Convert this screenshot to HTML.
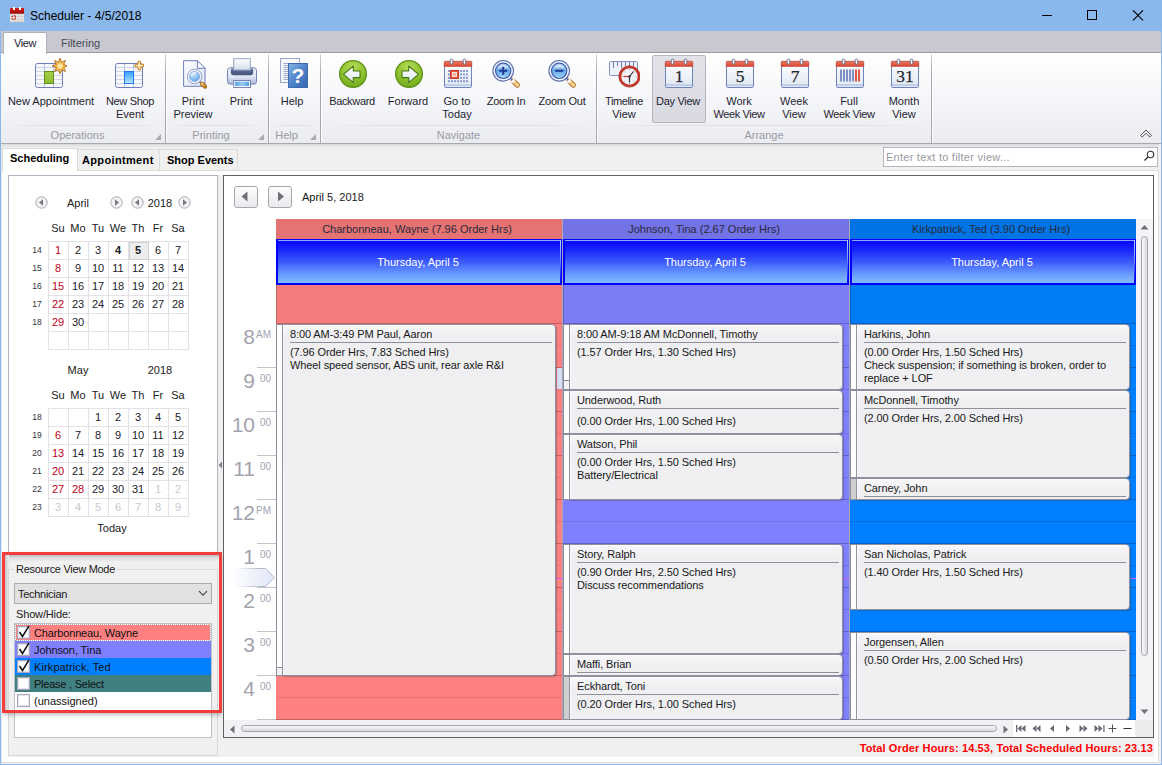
<!DOCTYPE html>
<html>
<head>
<meta charset="utf-8">
<title>Scheduler - 4/5/2018</title>
<style>
html,body{margin:0;padding:0;}
body{width:1162px;height:765px;overflow:hidden;position:relative;background:#f0f0f0;font-family:"Liberation Sans",sans-serif;font-size:11px;color:#202020;}
.abs,#win *{position:absolute;box-sizing:border-box;}
#win{position:absolute;left:0;top:0;width:1162px;height:765px;overflow:hidden;}
#win span.t{white-space:pre;line-height:13px;}
/* title */
#title{left:0;top:0;width:1162px;height:31px;background:#8bb8ec;}
#title .cap{left:30px;top:9px;font-size:12px;line-height:15px;color:#000;white-space:pre;}
/* ribbon */
#tabrow{left:1px;top:31px;width:1160px;height:22px;background:#c8c8d0;border-bottom:1px solid #9a9aa2;}
#tabview{left:3px;top:32px;width:44px;height:22px;background:#fdfdfe;border:1px solid #b0b0bc;border-bottom:none;border-radius:2px 2px 0 0;}
#ribbon{left:1px;top:53px;width:1160px;height:91px;background:linear-gradient(#ffffff,#f4f5f8 55%,#ebecf0);border-bottom:1px solid #a8a8b0;}
.gsep{top:54px;width:2px;height:89px;background:linear-gradient(90deg,#a6a7b2 50%,rgba(255,255,255,0.8) 50%);-webkit-mask-image:linear-gradient(rgba(0,0,0,0.5),#000 22%);mask-image:linear-gradient(rgba(0,0,0,0.5),#000 22%);}
.glab{top:129px;height:13px;line-height:13px;color:#9a9aa4;text-align:center;white-space:pre;}
.gline{top:125px;height:1px;background:linear-gradient(90deg,rgba(225,226,232,0),#dfe0e6 20%,#dfe0e6 80%,rgba(225,226,232,0));}
.rb{top:95px;width:120px;margin-left:-60px;text-align:center;line-height:13px;color:#1e1e32;white-space:pre;}
.ic{top:58px;width:32px;height:32px;margin-left:-16px;}
/* lower */
.ptab{top:148px;height:22px;font-weight:bold;font-size:11px;line-height:13px;color:#000;white-space:pre;}
</style>
</head>
<body>
<div id="win">
<!-- TITLE -->
<div id="title">
 <svg style="left:9px;top:6px;width:16px;height:17px" viewBox="0 0 16 17">
  <defs><linearGradient id="ti" x1="0" y1="0" x2="0" y2="1"><stop offset="0" stop-color="#d41c14"/><stop offset="1" stop-color="#a00c08"/></linearGradient></defs>
  <rect x="1" y="7.500" width="14" height="8.500" fill="#e9e7e4"/>
  <path d="M1 10.500h14M1 13.500h14M6.500 7.500v8.500M9.500 7.500v8.500M12.500 7.500v8.500" stroke="#d2d0cc" stroke-width="0.800"/>
  <rect x="1" y="15.500" width="14" height="0.800" fill="#c4c2be"/>
  <path d="M2 2h12a1 1 0 0 1 1 1v4.700h-14v-4.700a1 1 0 0 1 1-1z" fill="url(#ti)"/>
  <rect x="4" y="1" width="2" height="3" fill="#ffffff"/><rect x="10" y="1" width="2" height="3" fill="#ffffff"/>
  <circle cx="4.700" cy="11.600" r="2" fill="none" stroke="#cc2a24" stroke-width="1.100" stroke-dasharray="2.200 0.700"/>
 </svg>
 <span class="cap">Scheduler - 4/5/2018</span>
 <svg style="left:1042px;top:10px;width:102px;height:11px" viewBox="0 0 102 11"><path d="M0 5.500h10" stroke="#000" stroke-width="1"/><rect x="45.500" y="0.500" width="9" height="9" fill="none" stroke="#000" stroke-width="1"/><path d="M91 0.300L101 10.300M101 0.300L91 10.300" stroke="#000" stroke-width="1.100"/></svg>
</div>
<!-- RIBBON -->
<div id="tabrow"></div>
<div id="ribbon"></div>
<div id="tabview"></div>
<span class="t" style="left:14px;top:37px;color:#1e1e32;letter-spacing:-0.400px">View</span>
<span class="t" style="left:61px;top:37px;color:#4a4a55;">Filtering</span>
<div style="left:652px;top:55px;width:54px;height:68px;border:1px solid #b4b5be;border-radius:2px;background:linear-gradient(#e2e3e9,#d9dae1);"></div>
<svg class="ic" style="left:51px" viewBox="0 0 32 32"><defs><linearGradient id="g1" x1="0" y1="0" x2="0" y2="1"><stop offset="0" stop-color="#a4cf4a"/><stop offset="1" stop-color="#8dbb2e"/></linearGradient></defs><g transform="translate(-3,0)"><rect x="3.5" y="5.5" width="27" height="24" rx="2" fill="#f6f8fc" stroke="#6f7fb6"/><path d="M4 9.5H30" stroke="#cfd6ea" stroke-width="1"/><path d="M4 13.5H30" stroke="#cfd6ea" stroke-width="1"/><path d="M4 17.5H30" stroke="#cfd6ea" stroke-width="1"/><path d="M4 21.5H30" stroke="#cfd6ea" stroke-width="1"/><path d="M4 25.5H30" stroke="#cfd6ea" stroke-width="1"/><path d="M12.5 6V29" stroke="#b9c3e0" stroke-width="1"/><path d="M21.5 6V29" stroke="#b9c3e0" stroke-width="1"/><rect x="12.5" y="13.5" width="9" height="12" fill="url(#g1)" stroke="#5f8f1e"/><polygon points="28.0,0.2 29.5,4.4 33.5,2.5 31.6,6.5 35.8,8.0 31.6,9.5 33.5,13.5 29.5,11.6 28.0,15.8 26.5,11.6 22.5,13.5 24.4,9.5 20.2,8.0 24.4,6.5 22.5,2.5 26.5,4.4" fill="#f6c052" stroke="#bd761c" stroke-width="1"/><circle cx="28" cy="8" r="2.6" fill="#fbe3a0"/></g></svg>
<div class="rb" style="left:51px">New Appointment</div>
<svg class="ic" style="left:131px" viewBox="0 0 32 32"><defs><linearGradient id="g2" x1="0" y1="0" x2="0" y2="1"><stop offset="0" stop-color="#2fa0ff"/><stop offset="1" stop-color="#bfe4ff"/></linearGradient></defs><g transform="translate(-3,0)"><rect x="3.5" y="5.5" width="27" height="24" rx="2" fill="#f6f8fc" stroke="#6f7fb6"/><path d="M4 9.5H30" stroke="#cfd6ea" stroke-width="1"/><path d="M4 13.5H30" stroke="#cfd6ea" stroke-width="1"/><path d="M4 17.5H30" stroke="#cfd6ea" stroke-width="1"/><path d="M4 21.5H30" stroke="#cfd6ea" stroke-width="1"/><path d="M4 25.5H30" stroke="#cfd6ea" stroke-width="1"/><path d="M12.5 6V29" stroke="#b9c3e0" stroke-width="1"/><path d="M21.5 6V29" stroke="#b9c3e0" stroke-width="1"/><rect x="12.5" y="13.5" width="9" height="12" fill="url(#g2)" stroke="#1e78f0"/><path d="M26 3.300h2.600v3h3v2.600h-3v3h-2.600v-3h-3v-2.600h3z" fill="#fdebbd" stroke="#c4811f" stroke-width="1"/></g></svg>
<div class="rb" style="left:130px"><span style="position:static;letter-spacing:-0.33px">New Shop</span><br>Event</div>
<svg class="ic" style="left:194px" viewBox="0 0 32 32"><defs><radialGradient id="m3" cx="0.400" cy="0.300" r="0.800"><stop offset="0" stop-color="#cfe8fb"/><stop offset="0.600" stop-color="#7db8ec"/><stop offset="1" stop-color="#4a8cd8"/></radialGradient></defs><defs><linearGradient id="pg3" x1="0" y1="0" x2="1" y2="1"><stop offset="0" stop-color="#ffffff"/><stop offset="1" stop-color="#dde4f3"/></linearGradient><linearGradient id="ph3" x1="0" y1="0" x2="1" y2="1"><stop offset="0" stop-color="#f3c26a"/><stop offset="1" stop-color="#c07818"/></linearGradient></defs><path d="M5.600 2.700h13.800l7.600 7.600v18h-21.400z" fill="url(#pg3)" stroke="#6f7fb8"/><path d="M19.400 2.700v7.600h7.600z" fill="#fbfcff" stroke="#6f7fb8" stroke-linejoin="round"/><path d="M21 23L24 26" stroke="#8e9abc" stroke-width="2.400" stroke-linecap="round"/><path d="M24 25.900L27 28.500" stroke="#9a5c12" stroke-width="4.200" stroke-linecap="round"/><path d="M24 25.900L27 28.500" stroke="url(#ph3)" stroke-width="2.800" stroke-linecap="round"/><circle cx="16.6" cy="18.5" r="6" fill="url(#m3)" stroke="#eef2fa" stroke-width="2"/><circle cx="16.6" cy="18.5" r="7.3" fill="none" stroke="#7d8cbc" stroke-width="0.800"/><circle cx="16.6" cy="18.5" r="5" fill="none" stroke="#7f9fd0" stroke-width="0.700"/><path d="M13.300 17.500a3.800 3.800 0 0 1 4.500 -2.600" fill="none" stroke="#ffffff" stroke-width="1.200" stroke-linecap="round" opacity="0.850"/></svg>
<div class="rb" style="left:193px">Print<br>Preview</div>
<svg class="ic" style="left:242px" viewBox="0 0 32 32"><defs><linearGradient id="pb" x1="0" y1="0" x2="0" y2="1"><stop offset="0" stop-color="#f2f5fb"/><stop offset="0.550" stop-color="#dfe5f2"/><stop offset="1" stop-color="#a9b6d6"/></linearGradient><linearGradient id="pp" x1="0" y1="0" x2="0" y2="1"><stop offset="0" stop-color="#ffffff"/><stop offset="1" stop-color="#d6dcec"/></linearGradient><linearGradient id="ps" x1="0" y1="0" x2="0" y2="1"><stop offset="0" stop-color="#7f8db4"/><stop offset="0.350" stop-color="#566690"/><stop offset="1" stop-color="#44537c"/></linearGradient><linearGradient id="pt" x1="0" y1="0" x2="1" y2="0"><stop offset="0" stop-color="#4d9fe4"/><stop offset="0.500" stop-color="#9accf2"/><stop offset="1" stop-color="#4d9fe4"/></linearGradient></defs><path d="M4.500 9.700h23a3 3 0 0 1 3 3v11a2.400 2.400 0 0 1 -2.400 2.400h-24.200a2.400 2.400 0 0 1 -2.400-2.400v-11a3 3 0 0 1 3-3z" fill="url(#pb)" stroke="#7585b6"/><path d="M6.200 10.200h19.600a1.400 1.400 0 0 1 1.400 1.400v2.600a3 3 0 0 1 -3 3h-16.400a3 3 0 0 1 -3-3v-2.600a1.400 1.400 0 0 1 1.400-1.400z" fill="url(#ps)"/><rect x="7.700" y="0.700" width="16.600" height="11.300" fill="url(#pp)" stroke="#98a4c8"/><rect x="7.700" y="22.500" width="16.800" height="7" fill="#f6f8fc" stroke="#7585b6"/><rect x="9.200" y="23.700" width="13.800" height="4.300" fill="url(#pt)"/></svg>
<div class="rb" style="left:241px">Print</div>
<svg class="ic" style="left:292px" viewBox="0 0 32 32"><defs><linearGradient id="hb" x1="0" y1="0" x2="1" y2="1"><stop offset="0" stop-color="#86b4e6"/><stop offset="0.500" stop-color="#4f84c8"/><stop offset="1" stop-color="#3466ae"/></linearGradient></defs><rect x="4.500" y="0.500" width="19" height="24" fill="#f6f8fc" stroke="#9aa6c8"/><path d="M7.500 5.5h5" stroke="#9ca8c6" stroke-width="1"/><path d="M7.500 7.5h5" stroke="#9ca8c6" stroke-width="1"/><path d="M7.500 9.5h5" stroke="#9ca8c6" stroke-width="1"/><path d="M7.500 11.5h5" stroke="#9ca8c6" stroke-width="1"/><path d="M7.500 13.5h5" stroke="#9ca8c6" stroke-width="1"/><path d="M7.500 15.5h5" stroke="#9ca8c6" stroke-width="1"/><path d="M7.500 17.5h5" stroke="#9ca8c6" stroke-width="1"/><path d="M7.500 19.5h5" stroke="#9ca8c6" stroke-width="1"/><path d="M7.500 21.5h5" stroke="#9ca8c6" stroke-width="1"/><rect x="12.500" y="5.500" width="19" height="24" fill="url(#hb)" stroke="#3f6cb0"/><text x="21.800" y="25.300" text-anchor="middle" font-family="Liberation Sans,sans-serif" font-weight="bold" font-size="21" fill="#ffffff">?</text></svg>
<div class="rb" style="left:292px">Help</div>
<svg class="ic" style="left:353px" viewBox="0 0 32 32"><defs><radialGradient id="a4" cx="0.5" cy="0.25" r="0.8"><stop offset="0" stop-color="#b5dc58"/><stop offset="0.6" stop-color="#8cbf2c"/><stop offset="1" stop-color="#6ea21c"/></radialGradient><linearGradient id="aw4" x1="0" y1="0" x2="0" y2="1"><stop offset="0" stop-color="#ffffff"/><stop offset="1" stop-color="#dbe6f2"/></linearGradient></defs><circle cx="16" cy="16" r="13.4" fill="url(#a4)" stroke="#5c9016" stroke-width="1.2"/><path d="M6.500 16.300L16.300 8v5h6.700v6.600h-6.700v5z" fill="url(#aw4)" stroke="#43780f" stroke-width="1.100" stroke-linejoin="round"/></svg>
<div class="rb" style="left:352px"><span style="position:static;letter-spacing:-0.33px">Backward</span></div>
<svg class="ic" style="left:409px" viewBox="0 0 32 32"><defs><radialGradient id="a5" cx="0.5" cy="0.25" r="0.8"><stop offset="0" stop-color="#b5dc58"/><stop offset="0.6" stop-color="#8cbf2c"/><stop offset="1" stop-color="#6ea21c"/></radialGradient><linearGradient id="aw5" x1="0" y1="0" x2="0" y2="1"><stop offset="0" stop-color="#ffffff"/><stop offset="1" stop-color="#dbe6f2"/></linearGradient></defs><circle cx="16" cy="16" r="13.4" fill="url(#a5)" stroke="#5c9016" stroke-width="1.2"/><g transform="translate(32,0) scale(-1,1)"><path d="M6.500 16.300L16.300 8v5h6.700v6.600h-6.700v5z" fill="url(#aw5)" stroke="#43780f" stroke-width="1.100" stroke-linejoin="round"/></g></svg>
<div class="rb" style="left:408px">Forward</div>
<svg class="ic" style="left:458px" viewBox="0 0 32 32"><defs><linearGradient id="cb12" x1="0" y1="0" x2="0" y2="1"><stop offset="0" stop-color="#ffffff"/><stop offset="1" stop-color="#dfe7f3"/></linearGradient><linearGradient id="cr12" x1="0" y1="0" x2="0" y2="1"><stop offset="0" stop-color="#ee7b66"/><stop offset="1" stop-color="#d9432f"/></linearGradient></defs><rect x="2.5" y="3.5" width="27" height="26" rx="1.2" fill="url(#cb12)" stroke="#6f84bd"/><rect x="3" y="26.5" width="26" height="1" fill="#9fb3dc"/><path d="M3.2 3.2h25.6a1 1 0 0 1 1 1v4.3h-27.6v-4.3a1 1 0 0 1 1-1z" fill="url(#cr12)" stroke="#c24a3a" stroke-width="0.6"/><rect x="8.200" y="1" width="2.600" height="5.400" rx="1.300" fill="#f4f4f8" stroke="#666b86" stroke-width="0.900"/><rect x="21.200" y="1" width="2.600" height="5.400" rx="1.300" fill="#f4f4f8" stroke="#666b86" stroke-width="0.900"/><rect x="6" y="12.0" width="2" height="2" fill="#8e9bd0"/><rect x="9" y="12.0" width="2" height="2" fill="#8e9bd0"/><rect x="12" y="12.0" width="2" height="2" fill="#8e9bd0"/><rect x="15" y="12.0" width="2" height="2" fill="#8e9bd0"/><rect x="18" y="12.0" width="2" height="2" fill="#8e9bd0"/><rect x="21" y="12.0" width="2" height="2" fill="#8e9bd0"/><rect x="24" y="12.0" width="2" height="2" fill="#8e9bd0"/><rect x="6" y="15.4" width="2" height="2" fill="#8e9bd0"/><rect x="9" y="15.4" width="2" height="2" fill="#8e9bd0"/><rect x="12" y="15.4" width="2" height="2" fill="#8e9bd0"/><rect x="15" y="15.4" width="2" height="2" fill="#8e9bd0"/><rect x="18" y="15.4" width="2" height="2" fill="#8e9bd0"/><rect x="21" y="15.4" width="2" height="2" fill="#8e9bd0"/><rect x="24" y="15.4" width="2" height="2" fill="#8e9bd0"/><rect x="6" y="18.8" width="2" height="2" fill="#8e9bd0"/><rect x="9" y="18.8" width="2" height="2" fill="#8e9bd0"/><rect x="12" y="18.8" width="2" height="2" fill="#8e9bd0"/><rect x="15" y="18.8" width="2" height="2" fill="#8e9bd0"/><rect x="18" y="18.8" width="2" height="2" fill="#8e9bd0"/><rect x="21" y="18.8" width="2" height="2" fill="#8e9bd0"/><rect x="24" y="18.8" width="2" height="2" fill="#8e9bd0"/><rect x="6" y="22.2" width="2" height="2" fill="#8e9bd0"/><rect x="9" y="22.2" width="2" height="2" fill="#8e9bd0"/><rect x="12" y="22.2" width="2" height="2" fill="#8e9bd0"/><rect x="15" y="22.2" width="2" height="2" fill="#8e9bd0"/><rect x="18" y="22.2" width="2" height="2" fill="#8e9bd0"/><rect x="21" y="22.2" width="2" height="2" fill="#8e9bd0"/><rect x="24" y="22.2" width="2" height="2" fill="#8e9bd0"/><rect x="8.500" y="12.500" width="8" height="8" fill="#e8543e" stroke="#c23a28"/><rect x="10.500" y="14.500" width="4" height="4" fill="#f7b0a0" stroke="#fbe0d8" stroke-width="1"/></svg>
<div class="rb" style="left:457px">Go to<br>Today</div>
<svg class="ic" style="left:506px" viewBox="0 0 32 32"><defs><radialGradient id="m6" cx="0.400" cy="0.300" r="0.800"><stop offset="0" stop-color="#cfe8fb"/><stop offset="0.600" stop-color="#7db8ec"/><stop offset="1" stop-color="#4a8cd8"/></radialGradient></defs><defs><linearGradient id="zg6" x1="0" y1="0" x2="0" y2="1"><stop offset="0" stop-color="#c2daf6"/><stop offset="0.500" stop-color="#68a6e6"/><stop offset="1" stop-color="#a8daf8"/></linearGradient><linearGradient id="zh6" x1="0" y1="1" x2="1" y2="0"><stop offset="0" stop-color="#d88a20"/><stop offset="0.500" stop-color="#fbe2b0"/><stop offset="1" stop-color="#e09a30"/></linearGradient></defs><path d="M19.500 19.500L23.500 23.500" stroke="#5f6c98" stroke-width="3" stroke-linecap="butt"/><path d="M19.800 20.600L22.600 23.400" stroke="#c8d0e6" stroke-width="1" /><path d="M23.600 23.400L27.500 27.100" stroke="#a8661a" stroke-width="5" stroke-linecap="round"/><path d="M23.400 23.200L27.500 27.100" stroke="url(#zh6)" stroke-width="3.600" stroke-linecap="round"/><path d="M22.300 22.100L24 23.800" stroke="#f4f6fa" stroke-width="4.400"/><circle cx="13.2" cy="12.8" r="10.300" fill="#f4f7fc" stroke="#5f6fae" stroke-width="1.100"/><circle cx="13.2" cy="12.8" r="7.700" fill="url(#zg6)" stroke="#3f5cae" stroke-width="1.100"/><path d="M8 10.500a5.600 5.600 0 0 1 10.400 0a9 5 0 0 0 -10.400 0z" fill="#ffffff" opacity="0.550"/><path d="M9.200 12.800h8" stroke="#1d3a98" stroke-width="2"/><path d="M13.200 8.800v8" stroke="#1d3a98" stroke-width="2"/></svg>
<div class="rb" style="left:506px"><span style="position:static;letter-spacing:-0.25px">Zoom In</span></div>
<svg class="ic" style="left:562px" viewBox="0 0 32 32"><defs><radialGradient id="m7" cx="0.400" cy="0.300" r="0.800"><stop offset="0" stop-color="#cfe8fb"/><stop offset="0.600" stop-color="#7db8ec"/><stop offset="1" stop-color="#4a8cd8"/></radialGradient></defs><defs><linearGradient id="zg7" x1="0" y1="0" x2="0" y2="1"><stop offset="0" stop-color="#c2daf6"/><stop offset="0.500" stop-color="#68a6e6"/><stop offset="1" stop-color="#a8daf8"/></linearGradient><linearGradient id="zh7" x1="0" y1="1" x2="1" y2="0"><stop offset="0" stop-color="#d88a20"/><stop offset="0.500" stop-color="#fbe2b0"/><stop offset="1" stop-color="#e09a30"/></linearGradient></defs><path d="M19.500 19.500L23.500 23.500" stroke="#5f6c98" stroke-width="3" stroke-linecap="butt"/><path d="M19.800 20.600L22.600 23.400" stroke="#c8d0e6" stroke-width="1" /><path d="M23.600 23.400L27.500 27.100" stroke="#a8661a" stroke-width="5" stroke-linecap="round"/><path d="M23.400 23.200L27.500 27.100" stroke="url(#zh7)" stroke-width="3.600" stroke-linecap="round"/><path d="M22.300 22.100L24 23.800" stroke="#f4f6fa" stroke-width="4.400"/><circle cx="13.2" cy="12.8" r="10.300" fill="#f4f7fc" stroke="#5f6fae" stroke-width="1.100"/><circle cx="13.2" cy="12.8" r="7.700" fill="url(#zg7)" stroke="#3f5cae" stroke-width="1.100"/><path d="M8 10.500a5.600 5.600 0 0 1 10.400 0a9 5 0 0 0 -10.400 0z" fill="#ffffff" opacity="0.550"/><path d="M9.200 12.800h8" stroke="#1d3a98" stroke-width="2"/></svg>
<div class="rb" style="left:562px"><span style="position:static;letter-spacing:-0.25px">Zoom Out</span></div>
<svg class="ic" style="left:624px" viewBox="0 0 32 32"><rect x="1.500" y="3.500" width="28" height="14" rx="1" fill="#eef1fa" stroke="#8593c4"/><path d="M5.5 4v6" stroke="#6f7fb6" stroke-width="1"/><path d="M9.5 4v4" stroke="#6f7fb6" stroke-width="1"/><path d="M13.5 4v6" stroke="#6f7fb6" stroke-width="1"/><path d="M17.5 4v4" stroke="#6f7fb6" stroke-width="1"/><path d="M21.5 4v6" stroke="#6f7fb6" stroke-width="1"/><path d="M25.5 4v4" stroke="#6f7fb6" stroke-width="1"/><circle cx="21.500" cy="18.500" r="9.400" fill="#f1f3f8" stroke="#c53628" stroke-width="2.400"/><circle cx="21.500" cy="18.500" r="10.700" fill="none" stroke="#9e2a20" stroke-width="0.7"/><path d="M21.500 18.500L25.500 13.500" stroke="#333" stroke-width="1.200"/><path d="M21.500 18.500V24.500" stroke="#333" stroke-width="1.200"/><path d="M21.500 18.500H15.500" stroke="#d03a2c" stroke-width="1.200"/><circle cx="21.500" cy="18.500" r="1.200" fill="#333"/><g fill="#8a8fa0"><circle cx="21.500" cy="11.800" r="0.600"/><circle cx="28.200" cy="18.500" r="0.600"/><circle cx="21.500" cy="25.200" r="0.600"/><circle cx="14.800" cy="18.500" r="0.600"/><circle cx="26.200" cy="13.800" r="0.500"/><circle cx="26.200" cy="23.200" r="0.500"/><circle cx="16.800" cy="13.800" r="0.500"/><circle cx="16.800" cy="23.200" r="0.500"/></g></svg>
<div class="rb" style="left:624px"><span style="position:static;letter-spacing:-0.40px">Timeline</span><br>View</div>
<svg class="ic" style="left:679px" viewBox="0 0 32 32"><defs><linearGradient id="cb8" x1="0" y1="0" x2="0" y2="1"><stop offset="0" stop-color="#ffffff"/><stop offset="1" stop-color="#dfe7f3"/></linearGradient><linearGradient id="cr8" x1="0" y1="0" x2="0" y2="1"><stop offset="0" stop-color="#ee7b66"/><stop offset="1" stop-color="#d9432f"/></linearGradient></defs><rect x="2.5" y="3.5" width="27" height="26" rx="1.2" fill="url(#cb8)" stroke="#6f84bd"/><rect x="3" y="26.5" width="26" height="1" fill="#9fb3dc"/><path d="M3.2 3.2h25.6a1 1 0 0 1 1 1v4.3h-27.6v-4.3a1 1 0 0 1 1-1z" fill="url(#cr8)" stroke="#c24a3a" stroke-width="0.6"/><rect x="8.200" y="1" width="2.600" height="5.400" rx="1.300" fill="#f4f4f8" stroke="#666b86" stroke-width="0.900"/><rect x="21.200" y="1" width="2.600" height="5.400" rx="1.300" fill="#f4f4f8" stroke="#666b86" stroke-width="0.900"/><text x="16" y="24.2" text-anchor="middle" font-family="Liberation Serif,serif" font-size="17.500" fill="#26282f" stroke="#26282f" stroke-width="0.250">1</text></svg>
<div class="rb" style="left:678px"><span style="position:static;letter-spacing:-0.30px">Day View</span></div>
<svg class="ic" style="left:740px" viewBox="0 0 32 32"><defs><linearGradient id="cb9" x1="0" y1="0" x2="0" y2="1"><stop offset="0" stop-color="#ffffff"/><stop offset="1" stop-color="#dfe7f3"/></linearGradient><linearGradient id="cr9" x1="0" y1="0" x2="0" y2="1"><stop offset="0" stop-color="#ee7b66"/><stop offset="1" stop-color="#d9432f"/></linearGradient></defs><rect x="2.5" y="3.5" width="27" height="26" rx="1.2" fill="url(#cb9)" stroke="#6f84bd"/><rect x="3" y="26.5" width="26" height="1" fill="#9fb3dc"/><path d="M3.2 3.2h25.6a1 1 0 0 1 1 1v4.3h-27.6v-4.3a1 1 0 0 1 1-1z" fill="url(#cr9)" stroke="#c24a3a" stroke-width="0.6"/><rect x="8.200" y="1" width="2.600" height="5.400" rx="1.300" fill="#f4f4f8" stroke="#666b86" stroke-width="0.900"/><rect x="21.200" y="1" width="2.600" height="5.400" rx="1.300" fill="#f4f4f8" stroke="#666b86" stroke-width="0.900"/><text x="16" y="24.2" text-anchor="middle" font-family="Liberation Serif,serif" font-size="17.500" fill="#26282f" stroke="#26282f" stroke-width="0.250">5</text></svg>
<div class="rb" style="left:739px">Work<br><span style="position:static;letter-spacing:-0.40px">Week View</span></div>
<svg class="ic" style="left:795px" viewBox="0 0 32 32"><defs><linearGradient id="cb10" x1="0" y1="0" x2="0" y2="1"><stop offset="0" stop-color="#ffffff"/><stop offset="1" stop-color="#dfe7f3"/></linearGradient><linearGradient id="cr10" x1="0" y1="0" x2="0" y2="1"><stop offset="0" stop-color="#ee7b66"/><stop offset="1" stop-color="#d9432f"/></linearGradient></defs><rect x="2.5" y="3.5" width="27" height="26" rx="1.2" fill="url(#cb10)" stroke="#6f84bd"/><rect x="3" y="26.5" width="26" height="1" fill="#9fb3dc"/><path d="M3.2 3.2h25.6a1 1 0 0 1 1 1v4.3h-27.6v-4.3a1 1 0 0 1 1-1z" fill="url(#cr10)" stroke="#c24a3a" stroke-width="0.6"/><rect x="8.200" y="1" width="2.600" height="5.400" rx="1.300" fill="#f4f4f8" stroke="#666b86" stroke-width="0.900"/><rect x="21.200" y="1" width="2.600" height="5.400" rx="1.300" fill="#f4f4f8" stroke="#666b86" stroke-width="0.900"/><text x="16" y="24.2" text-anchor="middle" font-family="Liberation Serif,serif" font-size="17.500" fill="#26282f" stroke="#26282f" stroke-width="0.250">7</text></svg>
<div class="rb" style="left:794px">Week<br>View</div>
<svg class="ic" style="left:850px" viewBox="0 0 32 32"><defs><linearGradient id="cb13" x1="0" y1="0" x2="0" y2="1"><stop offset="0" stop-color="#ffffff"/><stop offset="1" stop-color="#dfe7f3"/></linearGradient><linearGradient id="cr13" x1="0" y1="0" x2="0" y2="1"><stop offset="0" stop-color="#ee7b66"/><stop offset="1" stop-color="#d9432f"/></linearGradient></defs><rect x="2.5" y="3.5" width="27" height="26" rx="1.2" fill="url(#cb13)" stroke="#6f84bd"/><rect x="3" y="26.5" width="26" height="1" fill="#9fb3dc"/><path d="M3.2 3.2h25.6a1 1 0 0 1 1 1v4.3h-27.6v-4.3a1 1 0 0 1 1-1z" fill="url(#cr13)" stroke="#c24a3a" stroke-width="0.6"/><rect x="8.200" y="1" width="2.600" height="5.400" rx="1.300" fill="#f4f4f8" stroke="#666b86" stroke-width="0.900"/><rect x="21.200" y="1" width="2.600" height="5.400" rx="1.300" fill="#f4f4f8" stroke="#666b86" stroke-width="0.900"/><rect x="6" y="11.500" width="2" height="12" fill="#7f8fc8"/><rect x="9" y="11.500" width="2" height="12" fill="#7f8fc8"/><rect x="12" y="11.500" width="2" height="12" fill="#7f8fc8"/><rect x="15" y="11.500" width="2" height="12" fill="#7f8fc8"/><rect x="18" y="11.500" width="2" height="12" fill="#7f8fc8"/><rect x="21" y="11.500" width="2" height="12" fill="#e4573f"/><rect x="24" y="11.500" width="2" height="12" fill="#e4573f"/></svg>
<div class="rb" style="left:849px">Full<br><span style="position:static;letter-spacing:-0.40px">Week View</span></div>
<svg class="ic" style="left:905px" viewBox="0 0 32 32"><defs><linearGradient id="cb11" x1="0" y1="0" x2="0" y2="1"><stop offset="0" stop-color="#ffffff"/><stop offset="1" stop-color="#dfe7f3"/></linearGradient><linearGradient id="cr11" x1="0" y1="0" x2="0" y2="1"><stop offset="0" stop-color="#ee7b66"/><stop offset="1" stop-color="#d9432f"/></linearGradient></defs><rect x="2.5" y="3.5" width="27" height="26" rx="1.2" fill="url(#cb11)" stroke="#6f84bd"/><rect x="3" y="26.5" width="26" height="1" fill="#9fb3dc"/><path d="M3.2 3.2h25.6a1 1 0 0 1 1 1v4.3h-27.6v-4.3a1 1 0 0 1 1-1z" fill="url(#cr11)" stroke="#c24a3a" stroke-width="0.6"/><rect x="8.200" y="1" width="2.600" height="5.400" rx="1.300" fill="#f4f4f8" stroke="#666b86" stroke-width="0.900"/><rect x="21.200" y="1" width="2.600" height="5.400" rx="1.300" fill="#f4f4f8" stroke="#666b86" stroke-width="0.900"/><text x="16" y="24.2" text-anchor="middle" font-family="Liberation Serif,serif" font-size="17.500" fill="#26282f" stroke="#26282f" stroke-width="0.250">31</text></svg>
<div class="rb" style="left:904px">Month<br>View</div>
<div class="gsep" style="left:165px"></div>
<div class="gsep" style="left:268px"></div>
<div class="gsep" style="left:320px"></div>
<div class="gsep" style="left:596px"></div>
<div class="gsep" style="left:931px"></div>
<div class="gline" style="left:8px;width:151px"></div>
<div class="glab" style="left:1px;width:153px">Operations</div>
<svg style="left:155px;top:134px;width:6px;height:6px" viewBox="0 0 6 6"><path d="M6 0V6H0z" fill="#a9aab4"/></svg>
<div class="gline" style="left:172px;width:90px"></div>
<div class="glab" style="left:165px;width:92px">Printing</div>
<svg style="left:258px;top:134px;width:6px;height:6px" viewBox="0 0 6 6"><path d="M6 0V6H0z" fill="#a9aab4"/></svg>
<div class="gline" style="left:275px;width:39px"></div>
<div class="glab" style="left:267px;width:39px">Help</div>
<svg style="left:310px;top:134px;width:6px;height:6px" viewBox="0 0 6 6"><path d="M6 0V6H0z" fill="#a9aab4"/></svg>
<div class="gline" style="left:327px;width:263px"></div>
<div class="glab" style="left:323px;width:271px">Navigate</div>
<div class="gline" style="left:603px;width:322px"></div>
<div class="glab" style="left:599px;width:330px">Arrange</div>
<svg style="left:1139px;top:127px;width:14px;height:11px" viewBox="0 0 14 11"><path d="M1.500 8.500L7 3l5.500 5.500" fill="none" stroke="#55565f" stroke-width="1"/><path d="M1.500 8.500l1.800 1.500L7 6.200l3.700 3.800 1.800-1.500" fill="none" stroke="#55565f" stroke-width="1"/></svg>
<div style="left:1px;top:144px;width:1160px;height:27px;background:#f0f0f0;"></div>
<div style="left:1px;top:144px;width:1160px;height:3px;background:linear-gradient(#d9d9de,#eaeaee);"></div>
<div style="left:1px;top:171px;width:1160px;height:593px;background:#ffffff;"></div>
<div style="left:2px;top:170px;width:1158px;height:1px;background:#dcdcdc;"></div>
<div style="left:2px;top:148px;width:76px;height:23px;background:#fff;border:1px solid #dcdcdc;border-bottom:none;"></div>
<div style="left:77px;top:149px;width:83px;height:22px;background:#f0f0f0;border:1px solid #dcdcdc;"></div>
<div style="left:159px;top:149px;width:79px;height:22px;background:#f0f0f0;border:1px solid #dcdcdc;"></div>
<span class="t ptab" style="left:10px;top:152px;">Scheduling</span>
<span class="t ptab" style="left:82px;top:154px;letter-spacing:0.35px">Appointment</span>
<span class="t ptab" style="left:167px;top:154px;">Shop Events</span>
<div style="left:883px;top:147px;width:275px;height:20px;background:#fff;border:1px solid #b5b5bd;"></div>
<span class="t" style="left:886px;top:151px;color:#9a9aa2;letter-spacing:0.250px">Enter text to filter view...</span>
<svg style="left:1143px;top:150px;width:12px;height:12px" viewBox="0 0 12 12"><circle cx="7.500" cy="4.500" r="3.200" fill="none" stroke="#303038" stroke-width="1.100"/><path d="M5.200 6.800L1.500 10.500" stroke="#303038" stroke-width="1.300"/></svg>
<div style="left:8px;top:175px;width:1146px;height:582px;background:#f0f0f0;"></div>
<div style="left:8px;top:175px;width:210px;height:400px;background:#fff;border:1px solid #b0b4c0;border-bottom:none;"></div>
<svg style="left:35px;top:196px;width:13px;height:13px" viewBox="0 0 13 13"><circle cx="6.500" cy="6.500" r="5.700" fill="#f2f2f5" stroke="#a8a8b2" stroke-width="1"/><path d="M8 3.200V9.800L4 6.500z" fill="#787882"/></svg>
<svg style="left:110px;top:196px;width:13px;height:13px" viewBox="0 0 13 13"><circle cx="6.500" cy="6.500" r="5.700" fill="#f2f2f5" stroke="#a8a8b2" stroke-width="1"/><path d="M5 3.200V9.800L9 6.500z" fill="#787882"/></svg>
<svg style="left:131px;top:196px;width:13px;height:13px" viewBox="0 0 13 13"><circle cx="6.500" cy="6.500" r="5.700" fill="#f2f2f5" stroke="#a8a8b2" stroke-width="1"/><path d="M8 3.200V9.800L4 6.500z" fill="#787882"/></svg>
<svg style="left:178px;top:196px;width:13px;height:13px" viewBox="0 0 13 13"><circle cx="6.500" cy="6.500" r="5.700" fill="#f2f2f5" stroke="#a8a8b2" stroke-width="1"/><path d="M5 3.200V9.800L9 6.500z" fill="#787882"/></svg>
<span class="t" style="left:58px;width:40px;text-align:center;top:197px">April</span>
<span class="t" style="left:140px;width:40px;text-align:center;top:197px">2018</span>
<span class="t" style="left:48px;width:20px;text-align:center;top:222px">Su</span>
<span class="t" style="left:68px;width:20px;text-align:center;top:222px">Mo</span>
<span class="t" style="left:88px;width:20px;text-align:center;top:222px">Tu</span>
<span class="t" style="left:108px;width:20px;text-align:center;top:222px">We</span>
<span class="t" style="left:128px;width:20px;text-align:center;top:222px">Th</span>
<span class="t" style="left:148px;width:20px;text-align:center;top:222px">Fr</span>
<span class="t" style="left:168px;width:20px;text-align:center;top:222px">Sa</span>
<div style="left:48px;top:241px;width:141px;height:109px;background:#fff;border:1px solid #e2e2e6;"></div>
<div style="left:48px;top:259px;width:141px;height:1px;background:#e2e2e6;"></div>
<div style="left:48px;top:277px;width:141px;height:1px;background:#e2e2e6;"></div>
<div style="left:48px;top:295px;width:141px;height:1px;background:#e2e2e6;"></div>
<div style="left:48px;top:313px;width:141px;height:1px;background:#e2e2e6;"></div>
<div style="left:48px;top:331px;width:141px;height:1px;background:#e2e2e6;"></div>
<div style="left:68px;top:241px;width:1px;height:109px;background:#e2e2e6;"></div>
<div style="left:88px;top:241px;width:1px;height:109px;background:#e2e2e6;"></div>
<div style="left:108px;top:241px;width:1px;height:109px;background:#e2e2e6;"></div>
<div style="left:128px;top:241px;width:1px;height:109px;background:#e2e2e6;"></div>
<div style="left:148px;top:241px;width:1px;height:109px;background:#e2e2e6;"></div>
<div style="left:168px;top:241px;width:1px;height:109px;background:#e2e2e6;"></div>
<span class="t" style="left:27px;width:20px;text-align:center;top:244px;font-size:8.500px;color:#303038">14</span>
<span class="t" style="left:27px;width:20px;text-align:center;top:262px;font-size:8.500px;color:#303038">15</span>
<span class="t" style="left:27px;width:20px;text-align:center;top:280px;font-size:8.500px;color:#303038">16</span>
<span class="t" style="left:27px;width:20px;text-align:center;top:298px;font-size:8.500px;color:#303038">17</span>
<span class="t" style="left:27px;width:20px;text-align:center;top:316px;font-size:8.500px;color:#303038">18</span>
<span class="t" style="left:48px;width:20px;text-align:center;top:244px;color:#c00018;">1</span>
<span class="t" style="left:68px;width:20px;text-align:center;top:244px;color:#202028;">2</span>
<span class="t" style="left:88px;width:20px;text-align:center;top:244px;color:#202028;">3</span>
<span class="t" style="left:108px;width:20px;text-align:center;top:244px;color:#202028;font-weight:bold;">4</span>
<div style="left:129px;top:242px;width:20px;height:18px;background:#ededf0;border:1px solid #cfcfd6;"></div>
<span class="t" style="left:128px;width:20px;text-align:center;top:244px;color:#202028;font-weight:bold;">5</span>
<span class="t" style="left:148px;width:20px;text-align:center;top:244px;color:#202028;">6</span>
<span class="t" style="left:168px;width:20px;text-align:center;top:244px;color:#202028;">7</span>
<span class="t" style="left:48px;width:20px;text-align:center;top:262px;color:#c00018;">8</span>
<span class="t" style="left:68px;width:20px;text-align:center;top:262px;color:#202028;">9</span>
<span class="t" style="left:88px;width:20px;text-align:center;top:262px;color:#202028;">10</span>
<span class="t" style="left:108px;width:20px;text-align:center;top:262px;color:#202028;">11</span>
<span class="t" style="left:128px;width:20px;text-align:center;top:262px;color:#202028;">12</span>
<span class="t" style="left:148px;width:20px;text-align:center;top:262px;color:#202028;">13</span>
<span class="t" style="left:168px;width:20px;text-align:center;top:262px;color:#202028;">14</span>
<span class="t" style="left:48px;width:20px;text-align:center;top:280px;color:#c00018;">15</span>
<span class="t" style="left:68px;width:20px;text-align:center;top:280px;color:#202028;">16</span>
<span class="t" style="left:88px;width:20px;text-align:center;top:280px;color:#202028;">17</span>
<span class="t" style="left:108px;width:20px;text-align:center;top:280px;color:#202028;">18</span>
<span class="t" style="left:128px;width:20px;text-align:center;top:280px;color:#202028;">19</span>
<span class="t" style="left:148px;width:20px;text-align:center;top:280px;color:#202028;">20</span>
<span class="t" style="left:168px;width:20px;text-align:center;top:280px;color:#202028;">21</span>
<span class="t" style="left:48px;width:20px;text-align:center;top:298px;color:#c00018;">22</span>
<span class="t" style="left:68px;width:20px;text-align:center;top:298px;color:#202028;">23</span>
<span class="t" style="left:88px;width:20px;text-align:center;top:298px;color:#202028;">24</span>
<span class="t" style="left:108px;width:20px;text-align:center;top:298px;color:#202028;">25</span>
<span class="t" style="left:128px;width:20px;text-align:center;top:298px;color:#202028;">26</span>
<span class="t" style="left:148px;width:20px;text-align:center;top:298px;color:#202028;">27</span>
<span class="t" style="left:168px;width:20px;text-align:center;top:298px;color:#202028;">28</span>
<span class="t" style="left:48px;width:20px;text-align:center;top:316px;color:#c00018;">29</span>
<span class="t" style="left:68px;width:20px;text-align:center;top:316px;color:#202028;">30</span>
<span class="t" style="left:58px;width:40px;text-align:center;top:364px">May</span>
<span class="t" style="left:140px;width:40px;text-align:center;top:364px">2018</span>
<span class="t" style="left:48px;width:20px;text-align:center;top:389px">Su</span>
<span class="t" style="left:68px;width:20px;text-align:center;top:389px">Mo</span>
<span class="t" style="left:88px;width:20px;text-align:center;top:389px">Tu</span>
<span class="t" style="left:108px;width:20px;text-align:center;top:389px">We</span>
<span class="t" style="left:128px;width:20px;text-align:center;top:389px">Th</span>
<span class="t" style="left:148px;width:20px;text-align:center;top:389px">Fr</span>
<span class="t" style="left:168px;width:20px;text-align:center;top:389px">Sa</span>
<div style="left:48px;top:408px;width:141px;height:109px;background:#fff;border:1px solid #e2e2e6;"></div>
<div style="left:48px;top:426px;width:141px;height:1px;background:#e2e2e6;"></div>
<div style="left:48px;top:444px;width:141px;height:1px;background:#e2e2e6;"></div>
<div style="left:48px;top:462px;width:141px;height:1px;background:#e2e2e6;"></div>
<div style="left:48px;top:480px;width:141px;height:1px;background:#e2e2e6;"></div>
<div style="left:48px;top:498px;width:141px;height:1px;background:#e2e2e6;"></div>
<div style="left:68px;top:408px;width:1px;height:109px;background:#e2e2e6;"></div>
<div style="left:88px;top:408px;width:1px;height:109px;background:#e2e2e6;"></div>
<div style="left:108px;top:408px;width:1px;height:109px;background:#e2e2e6;"></div>
<div style="left:128px;top:408px;width:1px;height:109px;background:#e2e2e6;"></div>
<div style="left:148px;top:408px;width:1px;height:109px;background:#e2e2e6;"></div>
<div style="left:168px;top:408px;width:1px;height:109px;background:#e2e2e6;"></div>
<span class="t" style="left:27px;width:20px;text-align:center;top:411px;font-size:8.500px;color:#303038">18</span>
<span class="t" style="left:27px;width:20px;text-align:center;top:429px;font-size:8.500px;color:#303038">19</span>
<span class="t" style="left:27px;width:20px;text-align:center;top:447px;font-size:8.500px;color:#303038">20</span>
<span class="t" style="left:27px;width:20px;text-align:center;top:465px;font-size:8.500px;color:#303038">21</span>
<span class="t" style="left:27px;width:20px;text-align:center;top:483px;font-size:8.500px;color:#303038">22</span>
<span class="t" style="left:27px;width:20px;text-align:center;top:501px;font-size:8.500px;color:#303038">23</span>
<span class="t" style="left:88px;width:20px;text-align:center;top:411px;color:#202028;">1</span>
<span class="t" style="left:108px;width:20px;text-align:center;top:411px;color:#202028;">2</span>
<span class="t" style="left:128px;width:20px;text-align:center;top:411px;color:#202028;">3</span>
<span class="t" style="left:148px;width:20px;text-align:center;top:411px;color:#202028;">4</span>
<span class="t" style="left:168px;width:20px;text-align:center;top:411px;color:#202028;">5</span>
<span class="t" style="left:48px;width:20px;text-align:center;top:429px;color:#c00018;">6</span>
<span class="t" style="left:68px;width:20px;text-align:center;top:429px;color:#202028;">7</span>
<span class="t" style="left:88px;width:20px;text-align:center;top:429px;color:#202028;">8</span>
<span class="t" style="left:108px;width:20px;text-align:center;top:429px;color:#202028;">9</span>
<span class="t" style="left:128px;width:20px;text-align:center;top:429px;color:#202028;">10</span>
<span class="t" style="left:148px;width:20px;text-align:center;top:429px;color:#202028;">11</span>
<span class="t" style="left:168px;width:20px;text-align:center;top:429px;color:#202028;">12</span>
<span class="t" style="left:48px;width:20px;text-align:center;top:447px;color:#c00018;">13</span>
<span class="t" style="left:68px;width:20px;text-align:center;top:447px;color:#202028;">14</span>
<span class="t" style="left:88px;width:20px;text-align:center;top:447px;color:#202028;">15</span>
<span class="t" style="left:108px;width:20px;text-align:center;top:447px;color:#202028;">16</span>
<span class="t" style="left:128px;width:20px;text-align:center;top:447px;color:#202028;">17</span>
<span class="t" style="left:148px;width:20px;text-align:center;top:447px;color:#202028;">18</span>
<span class="t" style="left:168px;width:20px;text-align:center;top:447px;color:#202028;">19</span>
<span class="t" style="left:48px;width:20px;text-align:center;top:465px;color:#c00018;">20</span>
<span class="t" style="left:68px;width:20px;text-align:center;top:465px;color:#202028;">21</span>
<span class="t" style="left:88px;width:20px;text-align:center;top:465px;color:#202028;">22</span>
<span class="t" style="left:108px;width:20px;text-align:center;top:465px;color:#202028;">23</span>
<span class="t" style="left:128px;width:20px;text-align:center;top:465px;color:#202028;">24</span>
<span class="t" style="left:148px;width:20px;text-align:center;top:465px;color:#202028;">25</span>
<span class="t" style="left:168px;width:20px;text-align:center;top:465px;color:#202028;">26</span>
<span class="t" style="left:48px;width:20px;text-align:center;top:483px;color:#c00018;">27</span>
<span class="t" style="left:68px;width:20px;text-align:center;top:483px;color:#c00018;">28</span>
<span class="t" style="left:88px;width:20px;text-align:center;top:483px;color:#202028;">29</span>
<span class="t" style="left:108px;width:20px;text-align:center;top:483px;color:#202028;">30</span>
<span class="t" style="left:128px;width:20px;text-align:center;top:483px;color:#202028;">31</span>
<span class="t" style="left:148px;width:20px;text-align:center;top:483px;color:#c8c8cc;">1</span>
<span class="t" style="left:168px;width:20px;text-align:center;top:483px;color:#c8c8cc;">2</span>
<span class="t" style="left:48px;width:20px;text-align:center;top:501px;color:#c8c8cc;">3</span>
<span class="t" style="left:68px;width:20px;text-align:center;top:501px;color:#c8c8cc;">4</span>
<span class="t" style="left:88px;width:20px;text-align:center;top:501px;color:#c8c8cc;">5</span>
<span class="t" style="left:108px;width:20px;text-align:center;top:501px;color:#c8c8cc;">6</span>
<span class="t" style="left:128px;width:20px;text-align:center;top:501px;color:#c8c8cc;">7</span>
<span class="t" style="left:148px;width:20px;text-align:center;top:501px;color:#c8c8cc;">8</span>
<span class="t" style="left:168px;width:20px;text-align:center;top:501px;color:#c8c8cc;">9</span>
<span class="t" style="left:82px;width:60px;text-align:center;top:522px">Today</span>
<div style="left:4px;top:554px;width:216px;height:157px;background:#f0f0f0;"></div>
<div style="left:5px;top:555px;width:214px;height:7px;background:linear-gradient(#b8b8b8,#dedede 40%,#f0f0f0);"></div>
<div style="left:5px;top:555px;width:4px;height:155px;background:linear-gradient(90deg,#c4c4c4,#f0f0f0);"></div>
<div style="left:8px;top:711px;width:210px;height:46px;background:#f0f0f0;"></div>
<div style="left:8px;top:569px;width:210px;height:187px;border:1px solid #d8d8d8;"></div>
<span class="t" style="left:14px;top:563px;background:#f0f0f0;padding:0 2px;letter-spacing:-0.300px">Resource View Mode</span>
<div style="left:14px;top:583px;width:198px;height:21px;background:#e1e1e1;border:1px solid #adadad;"></div>
<span class="t" style="left:18px;top:588px;letter-spacing:-0.280px">Technician</span>
<svg style="left:198px;top:590px;width:10px;height:7px" viewBox="0 0 10 7"><path d="M1 1.200L5 5.200L9 1.200" fill="none" stroke="#404040" stroke-width="1.100"/></svg>
<span class="t" style="left:16px;top:608px;letter-spacing:-0.150px">Show/Hide:</span>
<div style="left:14px;top:623px;width:198px;height:115px;background:#fff;border:1px solid #c0c0cc;"></div>
<div style="left:15px;top:624px;width:196px;height:17px;background:#ff8080;"></div>
<div style="left:15px;top:624px;width:196px;height:17px;border:1px solid #fff;outline:1px dotted #b0b0b0;outline-offset:-1px;"></div>
<div style="left:17px;top:626px;width:13px;height:13px;background:#fff;border:1px solid #a8a8b8;box-shadow:inset 0 0 0 1px #e4e4ec;"></div>
<svg style="left:17px;top:625px;width:14px;height:14px" viewBox="0 0 14 14"><path d="M2.500 7L5.500 11.500L12 0.800" fill="none" stroke="#101010" stroke-width="1.500"/></svg>
<span class="t" style="left:34px;top:627px;letter-spacing:-0.15px;color:#101010">Charbonneau, Wayne</span>
<div style="left:15px;top:641px;width:196px;height:17px;background:#8080ff;"></div>
<div style="left:17px;top:643px;width:13px;height:13px;background:#fff;border:1px solid #a8a8b8;box-shadow:inset 0 0 0 1px #e4e4ec;"></div>
<svg style="left:17px;top:642px;width:14px;height:14px" viewBox="0 0 14 14"><path d="M2.500 7L5.500 11.500L12 0.800" fill="none" stroke="#101010" stroke-width="1.500"/></svg>
<span class="t" style="left:34px;top:644px;letter-spacing:-0.10px;color:#101010">Johnson, Tina</span>
<div style="left:15px;top:658px;width:196px;height:17px;background:#0080ff;"></div>
<div style="left:17px;top:660px;width:13px;height:13px;background:#fff;border:1px solid #a8a8b8;box-shadow:inset 0 0 0 1px #e4e4ec;"></div>
<svg style="left:17px;top:659px;width:14px;height:14px" viewBox="0 0 14 14"><path d="M2.500 7L5.500 11.500L12 0.800" fill="none" stroke="#101010" stroke-width="1.500"/></svg>
<span class="t" style="left:34px;top:661px;letter-spacing:0.11px;color:#101010">Kirkpatrick, Ted</span>
<div style="left:15px;top:675px;width:196px;height:17px;background:#408080;"></div>
<div style="left:17px;top:677px;width:13px;height:13px;background:#fff;border:1px solid #a8a8b8;box-shadow:inset 0 0 0 1px #e4e4ec;"></div>
<span class="t" style="left:34px;top:678px;letter-spacing:-0.23px;color:#101010">Please , Select</span>
<div style="left:15px;top:692px;width:196px;height:17px;background:#ffffff;"></div>
<div style="left:17px;top:694px;width:13px;height:13px;background:#fff;border:1px solid #a8a8b8;box-shadow:inset 0 0 0 1px #e4e4ec;"></div>
<span class="t" style="left:34px;top:695px;letter-spacing:0.00px;color:#101010">(unassigned)</span>
<div style="left:2px;top:552px;width:220px;height:161px;border:3px solid #f43c3c;box-shadow:0 2px 4px rgba(0,0,0,0.25);"></div>
<svg style="left:218px;top:461px;width:5px;height:8px" viewBox="0 0 5 8"><path d="M4 0.500V7.500L0.500 4z" fill="#80808a"/></svg>
<div style="left:223px;top:175px;width:931px;height:563px;background:#fff;border:1px solid #606060;"></div>
<div style="left:234px;top:186px;width:24px;height:22px;border:1px solid #a6a6ae;border-radius:3px;background:linear-gradient(#fdfdfd,#e9e9ed);"></div>
<svg style="left:234px;top:186px;width:24px;height:22px" viewBox="0 0 24 22"><path d="M13.500 5.500V15.500L7.500 10.500z" fill="#707078"/></svg>
<div style="left:268px;top:186px;width:24px;height:22px;border:1px solid #a6a6ae;border-radius:3px;background:linear-gradient(#fdfdfd,#e9e9ed);"></div>
<svg style="left:268px;top:186px;width:24px;height:22px" viewBox="0 0 24 22"><path d="M10 5.500V15.500L16 10.500z" fill="#707078"/></svg>
<span class="t" style="left:302px;top:191px;color:#181820">April 5, 2018</span>
<span class="t" style="left:223px;width:32px;text-align:right;top:325px;font-size:21px;line-height:24px;color:#a3a3b0">8</span>
<span class="t" style="left:256px;top:329px;font-size:10px;line-height:11px;color:#a3a3b0">AM</span>
<span class="t" style="left:223px;width:32px;text-align:right;top:369px;font-size:21px;line-height:24px;color:#a3a3b0">9</span>
<span class="t" style="left:260px;top:373px;font-size:10px;line-height:11px;color:#a3a3b0">00</span>
<div style="left:257px;top:367px;width:20px;height:1px;background:#c4c4cc;"></div>
<span class="t" style="left:223px;width:32px;text-align:right;top:413px;font-size:21px;line-height:24px;color:#a3a3b0">10</span>
<span class="t" style="left:260px;top:417px;font-size:10px;line-height:11px;color:#a3a3b0">00</span>
<div style="left:257px;top:411px;width:20px;height:1px;background:#c4c4cc;"></div>
<span class="t" style="left:223px;width:32px;text-align:right;top:457px;font-size:21px;line-height:24px;color:#a3a3b0">11</span>
<span class="t" style="left:260px;top:461px;font-size:10px;line-height:11px;color:#a3a3b0">00</span>
<div style="left:257px;top:455px;width:20px;height:1px;background:#c4c4cc;"></div>
<span class="t" style="left:223px;width:32px;text-align:right;top:501px;font-size:21px;line-height:24px;color:#a3a3b0">12</span>
<span class="t" style="left:256px;top:505px;font-size:10px;line-height:11px;color:#a3a3b0">PM</span>
<div style="left:257px;top:499px;width:20px;height:1px;background:#c4c4cc;"></div>
<span class="t" style="left:223px;width:32px;text-align:right;top:545px;font-size:21px;line-height:24px;color:#a3a3b0">1</span>
<span class="t" style="left:260px;top:549px;font-size:10px;line-height:11px;color:#a3a3b0">00</span>
<div style="left:257px;top:543px;width:20px;height:1px;background:#c4c4cc;"></div>
<span class="t" style="left:223px;width:32px;text-align:right;top:589px;font-size:21px;line-height:24px;color:#a3a3b0">2</span>
<span class="t" style="left:260px;top:593px;font-size:10px;line-height:11px;color:#a3a3b0">00</span>
<div style="left:257px;top:587px;width:20px;height:1px;background:#c4c4cc;"></div>
<span class="t" style="left:223px;width:32px;text-align:right;top:633px;font-size:21px;line-height:24px;color:#a3a3b0">3</span>
<span class="t" style="left:260px;top:637px;font-size:10px;line-height:11px;color:#a3a3b0">00</span>
<div style="left:257px;top:631px;width:20px;height:1px;background:#c4c4cc;"></div>
<span class="t" style="left:223px;width:32px;text-align:right;top:677px;font-size:21px;line-height:24px;color:#a3a3b0">4</span>
<span class="t" style="left:260px;top:681px;font-size:10px;line-height:11px;color:#a3a3b0">00</span>
<div style="left:257px;top:675px;width:20px;height:1px;background:#c4c4cc;"></div>
<div style="left:257px;top:719px;width:20px;height:1px;background:#c4c4cc;"></div>
<svg style="left:226px;top:568px;width:52px;height:20px" viewBox="0 0 52 20"><defs><linearGradient id="tm" x1="0" y1="0" x2="1" y2="0"><stop offset="0.100" stop-color="#ffffff"/><stop offset="0.900" stop-color="#e4e9fa"/></linearGradient><linearGradient id="tms" x1="0" y1="0" x2="1" y2="0"><stop offset="0.100" stop-color="#c0c4d0" stop-opacity="0"/><stop offset="0.700" stop-color="#b4b8c6"/></linearGradient></defs><path d="M0 0.500H39.500L48.300 9.500L39.500 18.500H0z" fill="url(#tm)"/><path d="M4 0.500H39.500L48.300 9.500L39.500 18.500H4" fill="none" stroke="url(#tms)" stroke-width="1"/></svg>
<div style="left:276px;top:219px;width:286px;height:20px;background:#e57373;"></div>
<span class="t" style="left:274px;width:286px;text-align:center;top:223px;color:#2a2a3a">Charbonneau, Wayne (7.96 Order Hrs)</span>
<div style="left:276px;top:239px;width:286px;height:46px;background:#0000ff;"></div>
<div style="left:278px;top:240px;width:282px;height:43px;background:linear-gradient(#0505fb,#1624fa 22%,#3e5cfb 52%,#6a9cfd 80%,#82bcff);"></div>
<div style="left:278px;top:240px;width:283px;height:1px;background:#8fa6ff;"></div>
<div style="left:560px;top:240px;width:1px;height:43px;background:linear-gradient(#b4ccff,#7a9cff 40%,#1a2cff 85%,#0000ff);"></div>
<span class="t" style="left:275px;width:286px;text-align:center;top:256px;color:#fff">Thursday, April 5</span>
<div style="left:276px;top:285px;width:286px;height:39px;background:#f47c7c;"></div>
<div style="left:276px;top:324px;width:286px;height:396px;background:#ff8080;"></div>
<div style="left:276px;top:323px;width:286px;height:1px;background:#c46262;"></div>
<div style="left:276px;top:345px;width:286px;height:1px;background:#e67474;"></div>
<div style="left:276px;top:367px;width:286px;height:1px;background:#c46262;"></div>
<div style="left:276px;top:389px;width:286px;height:1px;background:#e67474;"></div>
<div style="left:276px;top:411px;width:286px;height:1px;background:#c46262;"></div>
<div style="left:276px;top:433px;width:286px;height:1px;background:#e67474;"></div>
<div style="left:276px;top:455px;width:286px;height:1px;background:#c46262;"></div>
<div style="left:276px;top:477px;width:286px;height:1px;background:#e67474;"></div>
<div style="left:276px;top:499px;width:286px;height:1px;background:#c46262;"></div>
<div style="left:276px;top:521px;width:286px;height:1px;background:#e67474;"></div>
<div style="left:276px;top:543px;width:286px;height:1px;background:#c46262;"></div>
<div style="left:276px;top:565px;width:286px;height:1px;background:#e67474;"></div>
<div style="left:276px;top:587px;width:286px;height:1px;background:#c46262;"></div>
<div style="left:276px;top:609px;width:286px;height:1px;background:#e67474;"></div>
<div style="left:276px;top:631px;width:286px;height:1px;background:#c46262;"></div>
<div style="left:276px;top:653px;width:286px;height:1px;background:#e67474;"></div>
<div style="left:276px;top:675px;width:286px;height:1px;background:#c46262;"></div>
<div style="left:276px;top:697px;width:286px;height:1px;background:#e67474;"></div>
<div style="left:276px;top:719px;width:286px;height:1px;background:#c46262;"></div>
<div style="left:276px;top:285px;width:1px;height:38px;background:#c46262;"></div>
<div style="left:562px;top:219px;width:1px;height:501px;background:#a8a8b8;"></div>
<div style="left:563px;top:219px;width:286px;height:20px;background:#7373e5;"></div>
<span class="t" style="left:561px;width:286px;text-align:center;top:223px;color:#2a2a3a">Johnson, Tina (2.67 Order Hrs)</span>
<div style="left:563px;top:239px;width:286px;height:46px;background:#0000ff;"></div>
<div style="left:565px;top:240px;width:282px;height:43px;background:linear-gradient(#0505fb,#1624fa 22%,#3e5cfb 52%,#6a9cfd 80%,#82bcff);"></div>
<div style="left:565px;top:240px;width:283px;height:1px;background:#8fa6ff;"></div>
<div style="left:847px;top:240px;width:1px;height:43px;background:linear-gradient(#b4ccff,#7a9cff 40%,#1a2cff 85%,#0000ff);"></div>
<span class="t" style="left:562px;width:286px;text-align:center;top:256px;color:#fff">Thursday, April 5</span>
<div style="left:563px;top:285px;width:286px;height:39px;background:#7c7cf4;"></div>
<div style="left:563px;top:324px;width:286px;height:396px;background:#8080ff;"></div>
<div style="left:563px;top:323px;width:286px;height:1px;background:#6262c4;"></div>
<div style="left:563px;top:345px;width:286px;height:1px;background:#7272e2;"></div>
<div style="left:563px;top:367px;width:286px;height:1px;background:#6262c4;"></div>
<div style="left:563px;top:389px;width:286px;height:1px;background:#7272e2;"></div>
<div style="left:563px;top:411px;width:286px;height:1px;background:#6262c4;"></div>
<div style="left:563px;top:433px;width:286px;height:1px;background:#7272e2;"></div>
<div style="left:563px;top:455px;width:286px;height:1px;background:#6262c4;"></div>
<div style="left:563px;top:477px;width:286px;height:1px;background:#7272e2;"></div>
<div style="left:563px;top:499px;width:286px;height:1px;background:#6262c4;"></div>
<div style="left:563px;top:521px;width:286px;height:1px;background:#7272e2;"></div>
<div style="left:563px;top:543px;width:286px;height:1px;background:#6262c4;"></div>
<div style="left:563px;top:565px;width:286px;height:1px;background:#7272e2;"></div>
<div style="left:563px;top:587px;width:286px;height:1px;background:#6262c4;"></div>
<div style="left:563px;top:609px;width:286px;height:1px;background:#7272e2;"></div>
<div style="left:563px;top:631px;width:286px;height:1px;background:#6262c4;"></div>
<div style="left:563px;top:653px;width:286px;height:1px;background:#7272e2;"></div>
<div style="left:563px;top:675px;width:286px;height:1px;background:#6262c4;"></div>
<div style="left:563px;top:697px;width:286px;height:1px;background:#7272e2;"></div>
<div style="left:563px;top:719px;width:286px;height:1px;background:#6262c4;"></div>
<div style="left:563px;top:285px;width:1px;height:38px;background:#6262c4;"></div>
<div style="left:849px;top:219px;width:1px;height:501px;background:#a8a8b8;"></div>
<div style="left:850px;top:219px;width:286px;height:20px;background:#0073e5;"></div>
<span class="t" style="left:848px;width:286px;text-align:center;top:223px;color:#2a2a3a">Kirkpatrick, Ted (3.90 Order Hrs)</span>
<div style="left:850px;top:239px;width:286px;height:46px;background:#0000ff;"></div>
<div style="left:852px;top:240px;width:282px;height:43px;background:linear-gradient(#0505fb,#1624fa 22%,#3e5cfb 52%,#6a9cfd 80%,#82bcff);"></div>
<div style="left:852px;top:240px;width:283px;height:1px;background:#8fa6ff;"></div>
<div style="left:1134px;top:240px;width:1px;height:43px;background:linear-gradient(#b4ccff,#7a9cff 40%,#1a2cff 85%,#0000ff);"></div>
<span class="t" style="left:849px;width:286px;text-align:center;top:256px;color:#fff">Thursday, April 5</span>
<div style="left:850px;top:285px;width:286px;height:39px;background:#007cf4;"></div>
<div style="left:850px;top:324px;width:286px;height:396px;background:#0080ff;"></div>
<div style="left:850px;top:323px;width:286px;height:1px;background:#0062c4;"></div>
<div style="left:850px;top:345px;width:286px;height:1px;background:#0070e0;"></div>
<div style="left:850px;top:367px;width:286px;height:1px;background:#0062c4;"></div>
<div style="left:850px;top:389px;width:286px;height:1px;background:#0070e0;"></div>
<div style="left:850px;top:411px;width:286px;height:1px;background:#0062c4;"></div>
<div style="left:850px;top:433px;width:286px;height:1px;background:#0070e0;"></div>
<div style="left:850px;top:455px;width:286px;height:1px;background:#0062c4;"></div>
<div style="left:850px;top:477px;width:286px;height:1px;background:#0070e0;"></div>
<div style="left:850px;top:499px;width:286px;height:1px;background:#0062c4;"></div>
<div style="left:850px;top:521px;width:286px;height:1px;background:#0070e0;"></div>
<div style="left:850px;top:543px;width:286px;height:1px;background:#0062c4;"></div>
<div style="left:850px;top:565px;width:286px;height:1px;background:#0070e0;"></div>
<div style="left:850px;top:587px;width:286px;height:1px;background:#0062c4;"></div>
<div style="left:850px;top:609px;width:286px;height:1px;background:#0070e0;"></div>
<div style="left:850px;top:631px;width:286px;height:1px;background:#0062c4;"></div>
<div style="left:850px;top:653px;width:286px;height:1px;background:#0070e0;"></div>
<div style="left:850px;top:675px;width:286px;height:1px;background:#0062c4;"></div>
<div style="left:850px;top:697px;width:286px;height:1px;background:#0070e0;"></div>
<div style="left:850px;top:719px;width:286px;height:1px;background:#0062c4;"></div>
<div style="left:850px;top:285px;width:1px;height:38px;background:#0062c4;"></div>
<div style="left:276px;top:578px;width:286px;height:1px;background:#c45cf0;"></div>
<div style="left:563px;top:578px;width:286px;height:1px;background:#c45cf0;"></div>
<div style="left:850px;top:578px;width:286px;height:1px;background:#c45cf0;"></div>
<div style="left:557px;top:368px;width:5px;height:21px;background:#d6def4;"></div>
<div style="left:276px;top:324px;width:7px;height:352px;background:#f2f2f4;border:1px solid #8c8c9c;border-right:none;"></div>
<div style="left:277px;top:325px;width:6px;height:343px;background:#fff;border-bottom:1px solid #8c8c9c;"></div>
<div style="left:282px;top:324px;width:274px;height:352px;background:linear-gradient(#f7f7f9,#efeff1 12px,#f0f0f2);border:1px solid #9090a0;border-radius:0 4px 4px 0;box-shadow:1px 1px 1px rgba(60,60,80,0.35),inset 1px 1px 0 rgba(255,255,255,0.7);"></div>
<span class="t" style="left:290px;top:328px;color:#181820;letter-spacing:-0.100px">8:00 AM-3:49 PM Paul, Aaron</span>
<div style="left:290px;top:342px;width:262px;height:1px;background:#90909c;"></div>
<span class="t" style="left:290px;top:346px;color:#181820;letter-spacing:-0.100px">(7.96 Order Hrs, 7.83 Sched Hrs)</span>
<span class="t" style="left:290px;top:359px;color:#181820;letter-spacing:-0.100px">Wheel speed sensor, ABS unit, rear axle R&amp;I</span>
<div style="left:563px;top:324px;width:7px;height:66px;background:#f2f2f4;border:1px solid #8c8c9c;border-right:none;"></div>
<div style="left:564px;top:325px;width:6px;height:56px;background:#fff;border-bottom:1px solid #8c8c9c;"></div>
<div style="left:569px;top:324px;width:274px;height:66px;background:linear-gradient(#f7f7f9,#efeff1 12px,#f0f0f2);border:1px solid #9090a0;border-radius:0 4px 4px 0;box-shadow:1px 1px 1px rgba(60,60,80,0.35),inset 1px 1px 0 rgba(255,255,255,0.7);"></div>
<span class="t" style="left:577px;top:328px;color:#181820;letter-spacing:-0.100px">8:00 AM-9:18 AM McDonnell, Timothy</span>
<div style="left:577px;top:342px;width:262px;height:1px;background:#90909c;"></div>
<span class="t" style="left:577px;top:346px;color:#181820;letter-spacing:-0.100px">(1.57 Order Hrs, 1.30 Sched Hrs)</span>
<div style="left:563px;top:390px;width:7px;height:44px;background:#ffffff;border:1px solid #8c8c9c;border-right:none;"></div>
<div style="left:569px;top:390px;width:274px;height:44px;background:linear-gradient(#f7f7f9,#efeff1 12px,#f0f0f2);border:1px solid #9090a0;border-radius:0 4px 4px 0;box-shadow:1px 1px 1px rgba(60,60,80,0.35),inset 1px 1px 0 rgba(255,255,255,0.7);"></div>
<span class="t" style="left:577px;top:394px;color:#181820;letter-spacing:-0.100px">Underwood, Ruth</span>
<div style="left:577px;top:408px;width:262px;height:1px;background:#90909c;"></div>
<span class="t" style="left:577px;top:415px;color:#181820;letter-spacing:-0.100px">(0.00 Order Hrs, 1.00 Sched Hrs)</span>
<div style="left:563px;top:434px;width:7px;height:66px;background:#ffffff;border:1px solid #8c8c9c;border-right:none;"></div>
<div style="left:569px;top:434px;width:274px;height:66px;background:linear-gradient(#f7f7f9,#efeff1 12px,#f0f0f2);border:1px solid #9090a0;border-radius:0 4px 4px 0;box-shadow:1px 1px 1px rgba(60,60,80,0.35),inset 1px 1px 0 rgba(255,255,255,0.7);"></div>
<span class="t" style="left:577px;top:438px;color:#181820;letter-spacing:-0.100px">Watson, Phil</span>
<div style="left:577px;top:452px;width:262px;height:1px;background:#90909c;"></div>
<span class="t" style="left:577px;top:456px;color:#181820;letter-spacing:-0.100px">(0.00 Order Hrs, 1.50 Sched Hrs)</span>
<span class="t" style="left:577px;top:469px;color:#181820;letter-spacing:-0.100px">Battery/Electrical</span>
<div style="left:563px;top:544px;width:7px;height:110px;background:#ffffff;border:1px solid #8c8c9c;border-right:none;"></div>
<div style="left:569px;top:544px;width:274px;height:110px;background:linear-gradient(#f7f7f9,#efeff1 12px,#f0f0f2);border:1px solid #9090a0;border-radius:0 4px 4px 0;box-shadow:1px 1px 1px rgba(60,60,80,0.35),inset 1px 1px 0 rgba(255,255,255,0.7);"></div>
<span class="t" style="left:577px;top:548px;color:#181820;letter-spacing:-0.100px">Story, Ralph</span>
<div style="left:577px;top:562px;width:262px;height:1px;background:#90909c;"></div>
<span class="t" style="left:577px;top:566px;color:#181820;letter-spacing:-0.100px">(0.90 Order Hrs, 2.50 Sched Hrs)</span>
<span class="t" style="left:577px;top:579px;color:#181820;letter-spacing:-0.100px">Discuss recommendations</span>
<div style="left:563px;top:654px;width:7px;height:22px;background:#ffffff;border:1px solid #8c8c9c;border-right:none;"></div>
<div style="left:569px;top:654px;width:274px;height:22px;background:linear-gradient(#f7f7f9,#efeff1 12px,#f0f0f2);border:1px solid #9090a0;border-radius:0 4px 4px 0;box-shadow:1px 1px 1px rgba(60,60,80,0.35),inset 1px 1px 0 rgba(255,255,255,0.7);"></div>
<span class="t" style="left:577px;top:658px;color:#181820;letter-spacing:-0.100px">Maffi, Brian</span>
<div style="left:577px;top:672px;width:262px;height:1px;background:#90909c;"></div>
<div style="left:563px;top:676px;width:7px;height:44px;background:#cfcfd0;border:1px solid #8c8c9c;border-right:none;"></div>
<div style="left:569px;top:676px;width:274px;height:44px;background:linear-gradient(#f7f7f9,#efeff1 12px,#f0f0f2);border:1px solid #9090a0;border-radius:0 4px 4px 0;box-shadow:1px 1px 1px rgba(60,60,80,0.35),inset 1px 1px 0 rgba(255,255,255,0.7);"></div>
<span class="t" style="left:577px;top:680px;color:#181820;letter-spacing:-0.100px">Eckhardt, Toni</span>
<div style="left:577px;top:694px;width:262px;height:1px;background:#90909c;"></div>
<span class="t" style="left:577px;top:698px;color:#181820;letter-spacing:-0.100px">(0.20 Order Hrs, 1.00 Sched Hrs)</span>
<div style="left:850px;top:324px;width:7px;height:66px;background:#ffffff;border:1px solid #8c8c9c;border-right:none;"></div>
<div style="left:856px;top:324px;width:274px;height:66px;background:linear-gradient(#f7f7f9,#efeff1 12px,#f0f0f2);border:1px solid #9090a0;border-radius:0 4px 4px 0;box-shadow:1px 1px 1px rgba(60,60,80,0.35),inset 1px 1px 0 rgba(255,255,255,0.7);"></div>
<span class="t" style="left:864px;top:328px;color:#181820;letter-spacing:-0.100px">Harkins, John</span>
<div style="left:864px;top:342px;width:262px;height:1px;background:#90909c;"></div>
<span class="t" style="left:864px;top:346px;color:#181820;letter-spacing:-0.100px">(0.00 Order Hrs, 1.50 Sched Hrs)</span>
<span class="t" style="left:864px;top:359px;color:#181820;letter-spacing:-0.100px">Check suspension; if something is broken, order to</span>
<span class="t" style="left:864px;top:372px;color:#181820;letter-spacing:-0.100px">replace + LOF</span>
<div style="left:850px;top:390px;width:7px;height:88px;background:#ffffff;border:1px solid #8c8c9c;border-right:none;"></div>
<div style="left:856px;top:390px;width:274px;height:88px;background:linear-gradient(#f7f7f9,#efeff1 12px,#f0f0f2);border:1px solid #9090a0;border-radius:0 4px 4px 0;box-shadow:1px 1px 1px rgba(60,60,80,0.35),inset 1px 1px 0 rgba(255,255,255,0.7);"></div>
<span class="t" style="left:864px;top:394px;color:#181820;letter-spacing:-0.100px">McDonnell, Timothy</span>
<div style="left:864px;top:408px;width:262px;height:1px;background:#90909c;"></div>
<span class="t" style="left:864px;top:412px;color:#181820;letter-spacing:-0.100px">(2.00 Order Hrs, 2.00 Sched Hrs)</span>
<div style="left:850px;top:478px;width:7px;height:22px;background:#cfcfd0;border:1px solid #8c8c9c;border-right:none;"></div>
<div style="left:856px;top:478px;width:274px;height:22px;background:linear-gradient(#f7f7f9,#efeff1 12px,#f0f0f2);border:1px solid #9090a0;border-radius:0 4px 4px 0;box-shadow:1px 1px 1px rgba(60,60,80,0.35),inset 1px 1px 0 rgba(255,255,255,0.7);"></div>
<span class="t" style="left:864px;top:482px;color:#181820;letter-spacing:-0.100px">Carney, John</span>
<div style="left:864px;top:496px;width:262px;height:1px;background:#90909c;"></div>
<div style="left:850px;top:544px;width:7px;height:66px;background:#ffffff;border:1px solid #8c8c9c;border-right:none;"></div>
<div style="left:856px;top:544px;width:274px;height:66px;background:linear-gradient(#f7f7f9,#efeff1 12px,#f0f0f2);border:1px solid #9090a0;border-radius:0 4px 4px 0;box-shadow:1px 1px 1px rgba(60,60,80,0.35),inset 1px 1px 0 rgba(255,255,255,0.7);"></div>
<span class="t" style="left:864px;top:548px;color:#181820;letter-spacing:-0.100px">San Nicholas, Patrick</span>
<div style="left:864px;top:562px;width:262px;height:1px;background:#90909c;"></div>
<span class="t" style="left:864px;top:566px;color:#181820;letter-spacing:-0.100px">(1.40 Order Hrs, 1.50 Sched Hrs)</span>
<div style="left:850px;top:632px;width:7px;height:88px;background:#ffffff;border:1px solid #8c8c9c;border-right:none;"></div>
<div style="left:856px;top:632px;width:274px;height:88px;background:linear-gradient(#f7f7f9,#efeff1 12px,#f0f0f2);border:1px solid #9090a0;border-radius:0 4px 4px 0;box-shadow:1px 1px 1px rgba(60,60,80,0.35),inset 1px 1px 0 rgba(255,255,255,0.7);"></div>
<span class="t" style="left:864px;top:636px;color:#181820;letter-spacing:-0.100px">Jorgensen, Allen</span>
<div style="left:864px;top:650px;width:262px;height:1px;background:#90909c;"></div>
<span class="t" style="left:864px;top:654px;color:#181820;letter-spacing:-0.100px">(0.50 Order Hrs, 2.00 Sched Hrs)</span>
<div style="left:224px;top:720px;width:929px;height:17px;background:#f2f2f5;"></div>
<div style="left:1136px;top:219px;width:17px;height:501px;background:#f4f4f7;"></div>
<svg style="left:1140px;top:224px;width:9px;height:6px" viewBox="0 0 9 6"><path d="M0.500 5.500L4.500 1L8.500 5.500z" fill="#70707c"/></svg>
<svg style="left:1140px;top:709px;width:9px;height:6px" viewBox="0 0 9 6"><path d="M0.500 0.500L4.500 5L8.500 0.500z" fill="#70707c"/></svg>
<div style="left:1141px;top:236px;width:7px;height:420px;border:1px solid #a4a4b0;border-radius:4px;background:linear-gradient(90deg,#fafafc,#d8d8de);"></div>
<svg style="left:229px;top:725px;width:6px;height:9px" viewBox="0 0 6 9"><path d="M5.500 0.500V8.500L1 4.500z" fill="#70707c"/></svg>
<div style="left:241px;top:725px;width:756px;height:7px;border:1px solid #a4a4b0;border-radius:4px;background:linear-gradient(#fafafc,#d8d8de);"></div>
<svg style="left:1003px;top:725px;width:6px;height:9px" viewBox="0 0 6 9"><path d="M0.500 0.500V8.500L5 4.500z" fill="#70707c"/></svg>
<div style="left:1013px;top:720px;width:122px;height:17px;background:#fff;"></div>
<div style="left:1135px;top:720px;width:18px;height:17px;background:#ebebee;"></div>
<svg style="left:1013px;top:724px;width:122px;height:9px" viewBox="0 0 122 9"><rect x="3" y="1" width="1.300" height="7" fill="#6a6a74"/><path d="M8.5 1V8L4.5 4.500z" fill="#6a6a74"/><path d="M12.5 1V8L8.5 4.500z" fill="#6a6a74"/><path d="M23.5 1V8L19.5 4.500z" fill="#6a6a74"/><path d="M27.5 1V8L23.5 4.500z" fill="#6a6a74"/><path d="M41 1V8L37 4.500z" fill="#6a6a74"/><path d="M53 1V8L57 4.500z" fill="#6a6a74"/><path d="M66.5 1V8L70.5 4.500z" fill="#6a6a74"/><path d="M70.5 1V8L74.5 4.500z" fill="#6a6a74"/><path d="M81.5 1V8L85.5 4.500z" fill="#6a6a74"/><path d="M85.5 1V8L89.5 4.500z" fill="#6a6a74"/><rect x="90.300" y="1" width="1.300" height="7" fill="#6a6a74"/><path d="M95.500 4.500h8M99.500 0.500v8" stroke="#50505a" stroke-width="1"/><path d="M110.500 4.500h8" stroke="#30303a" stroke-width="1"/></svg>
<span class="t" style="right:9px;top:742px;color:#ff0000;font-weight:bold;letter-spacing:0.12px;">Total Order Hours: 14.53, Total Scheduled Hours: 23.13</span>
<div style="left:1158px;top:171px;width:1px;height:592px;background:#dcdcdc;"></div>
<div style="left:1159px;top:144px;width:2px;height:620px;background:#f3f2f1;"></div>
<div style="left:0;top:31px;width:1px;height:734px;background:#8bb8ec;"></div>
<div style="left:1px;top:144px;width:1px;height:620px;background:#e6e5e4;"></div>
<div style="left:1161px;top:31px;width:1px;height:734px;background:#8bb8ec;"></div>
<div style="left:0;top:764px;width:1162px;height:1px;background:#8bb8ec;"></div>
<div style="left:1px;top:763px;width:1160px;height:1px;background:#f3f2f1;"></div>
<div style="left:2px;top:762px;width:1157px;height:1px;background:#dcdcdc;"></div>
</div>
</body>
</html>
